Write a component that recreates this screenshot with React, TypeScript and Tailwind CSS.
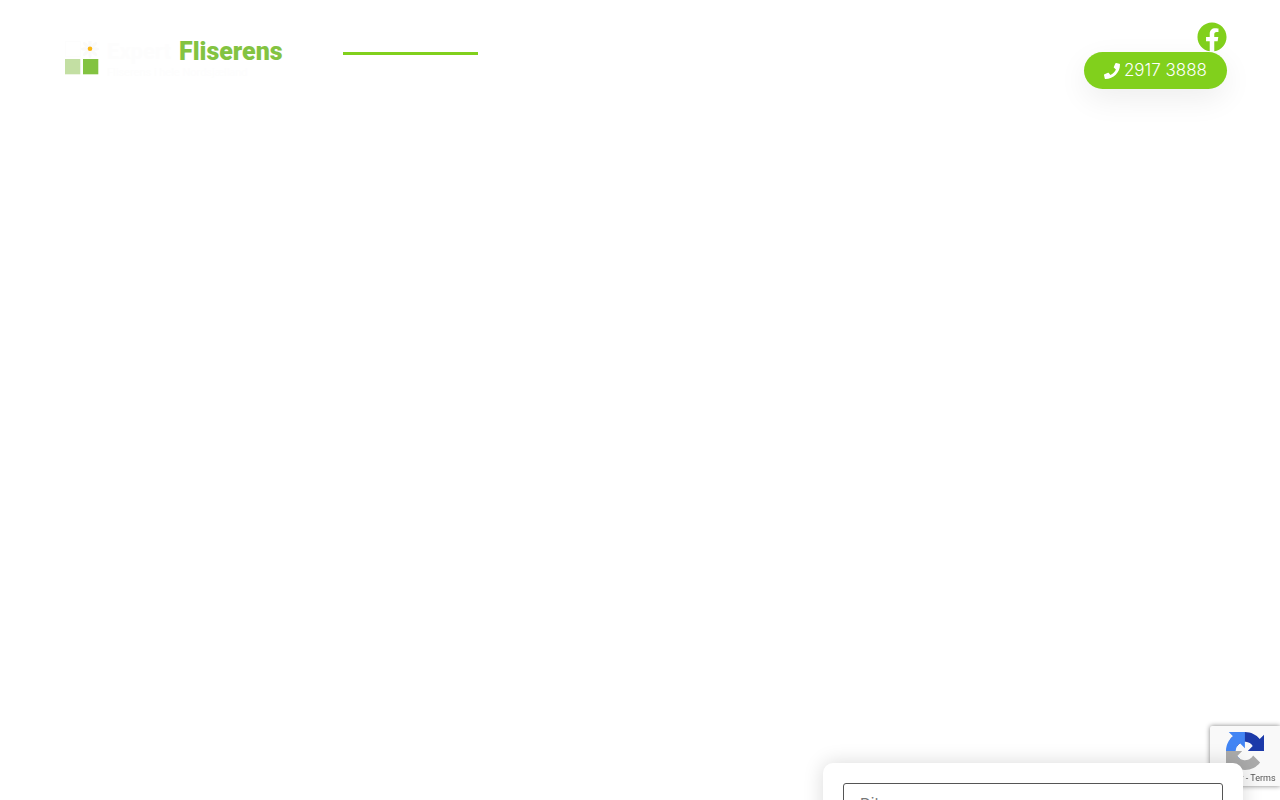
import { useState } from "react";
import { FaFacebook, FaPhone } from "react-icons/fa";

const fieldClass =
  "h-10 w-full rounded-[3px] border border-[#555555] bg-white px-4 font-['Inter',sans-serif] text-[15px] text-gray-700 placeholder:text-[#777777] focus:outline-none";

function LogoMark() {
  return (
    <svg viewBox="0 0 34 34" className="h-[34px] w-[34px]" aria-hidden="true">
      <rect x="0.5" y="0.5" width="15" height="15" fill="#fff" stroke="#fdfdfd" />
      <g fill="#fafafa">
        <ellipse cx="25" cy="2.5" rx="1.7" ry="4" />
        <ellipse cx="25" cy="13" rx="1.7" ry="4" />
        <ellipse cx="20" cy="8" rx="4" ry="1.7" />
        <ellipse cx="30" cy="8" rx="4" ry="1.7" />
        <ellipse cx="25" cy="2.5" rx="1.7" ry="4" transform="rotate(45 25 8)" />
        <ellipse cx="25" cy="2.5" rx="1.7" ry="4" transform="rotate(135 25 8)" />
        <ellipse cx="25" cy="2.5" rx="1.7" ry="4" transform="rotate(225 25 8)" />
        <ellipse cx="25" cy="2.5" rx="1.7" ry="4" transform="rotate(315 25 8)" />
      </g>
      <circle cx="25" cy="7.7" r="2.3" fill="#fbb713" />
      <rect x="0" y="18" width="15.3" height="15.3" fill="#c3dfa3" />
      <rect x="18" y="18" width="15.3" height="15.3" fill="#83c341" />
    </svg>
  );
}

function Logo() {
  return (
    <a href="#" className="flex gap-2 font-['Roboto',sans-serif]">
      <LogoMark />
      <span className="flex flex-col">
        <span className="flex text-[25px] leading-[22px] font-black">
          <span className="w-[72px] text-[22px] font-bold text-[#fdfdfd]">
            Expert
          </span>
          <span className="text-[#83c341]">Fliserens</span>
        </span>
        <span className="pt-1 text-[11px] leading-3 text-[#fdfdfd]">
          Fliserens i hele Nordsjælland
        </span>
      </span>
    </a>
  );
}

function Header() {
  return (
    <header className="flex items-start pt-5 pr-[53px] pl-[65px]">
      <div className="w-[278px] pt-[21px]">
        <Logo />
      </div>
      <nav className="pt-8">
        <a
          href="#"
          aria-label="Forside"
          className="block w-[135px] border-b-3 border-[#81d01c]"
        />
      </nav>
      <div className="ml-auto flex flex-col items-end">
        <a href="#" aria-label="Facebook" className="pt-0.5 text-[#81d01c]">
          <FaFacebook size={30} />
        </a>
        <a
          href="tel:29173888"
          className="flex h-[37px] items-center gap-1 rounded-full bg-[#81d01c] px-5 text-[17px] font-light text-white shadow-[0_10px_30px_rgba(0,0,0,0.07)]"
        >
          <FaPhone size={16} />
          <span className="font-['Inter',sans-serif]">2917 3888</span>
        </a>
      </div>
    </header>
  );
}

function ContactForm() {
  const [name, setName] = useState("");

  return (
    <form className="relative z-20 w-[420px] rounded-[10px] bg-white p-5 shadow-[0_0_20px_rgba(0,0,0,0.15)]">
      <input
        type="text"
        name="name"
        aria-label="Dit navn"
        placeholder="Dit navn"
        value={name}
        onChange={(e) => setName(e.target.value)}
        className={fieldClass}
      />
    </form>
  );
}

function RecaptchaLogo() {
  return (
    <svg viewBox="0 0 64 64" className="h-[38px] w-[38px]" aria-hidden="true">
      <path
        fill="#1c3aa9"
        d="M64 31.955l-.033-1.37V4.687l-7.16 7.16C50.948 4.674 42.033.093 32.05.093c-10.4 0-19.622 4.96-25.458 12.64l11.736 11.86a15.55 15.55 0 0 1 4.754-5.334c2.05-1.6 4.952-2.906 8.968-2.906.485 0 .86.057 1.135.163 4.976.393 9.288 3.14 11.828 7.124l-8.307 8.307L64 31.953"
      />
      <path
        fill="#4285f4"
        d="M31.862.094l-1.37.033H4.594l7.16 7.16C4.58 13.147 0 22.06 0 32.046c0 10.4 4.96 19.622 12.64 25.458L24.5 45.768a15.55 15.55 0 0 1-5.334-4.754c-1.6-2.05-2.906-4.952-2.906-8.968 0-.485.057-.86.163-1.135.393-4.976 3.14-9.288 7.124-11.828l8.307 8.307L31.86.095"
      />
      <path
        fill="#ababab"
        d="M.001 32.045l.033 1.37v25.898l7.16-7.16c5.86 7.173 14.774 11.754 24.76 11.754 10.4 0 19.622-4.96 25.458-12.64l-11.736-11.86a15.55 15.55 0 0 1-4.754 5.334c-2.05 1.6-4.952 2.906-8.968 2.906-.485 0-.86-.057-1.135-.163-4.976-.393-9.288-3.14-11.828-7.124l8.307-8.307c-10.522.04-22.4.066-27.295-.005"
      />
    </svg>
  );
}

function RecaptchaBadge() {
  return (
    <div className="fixed right-0 bottom-[14px] z-10 flex h-[60px] w-[70px] flex-col items-center rounded-l-[2px] bg-[#f9f9f9] pt-1.5 font-['Roboto',sans-serif] text-[9px] leading-3 text-[#555555] shadow-[0_0_5px_gray]">
      <RecaptchaLogo />
      <p className="pt-0.5 whitespace-nowrap">
        <a href="#">Privacy</a> - <a href="#">Terms</a>
      </p>
    </div>
  );
}

export default function App() {
  return (
    <div className="bg-white">
      <div className="min-h-[calc(100vh-37px)]">
        <Header />
      </div>
      <main className="flex justify-end pr-[37px]">
        <ContactForm />
      </main>
      <RecaptchaBadge />
    </div>
  );
}
